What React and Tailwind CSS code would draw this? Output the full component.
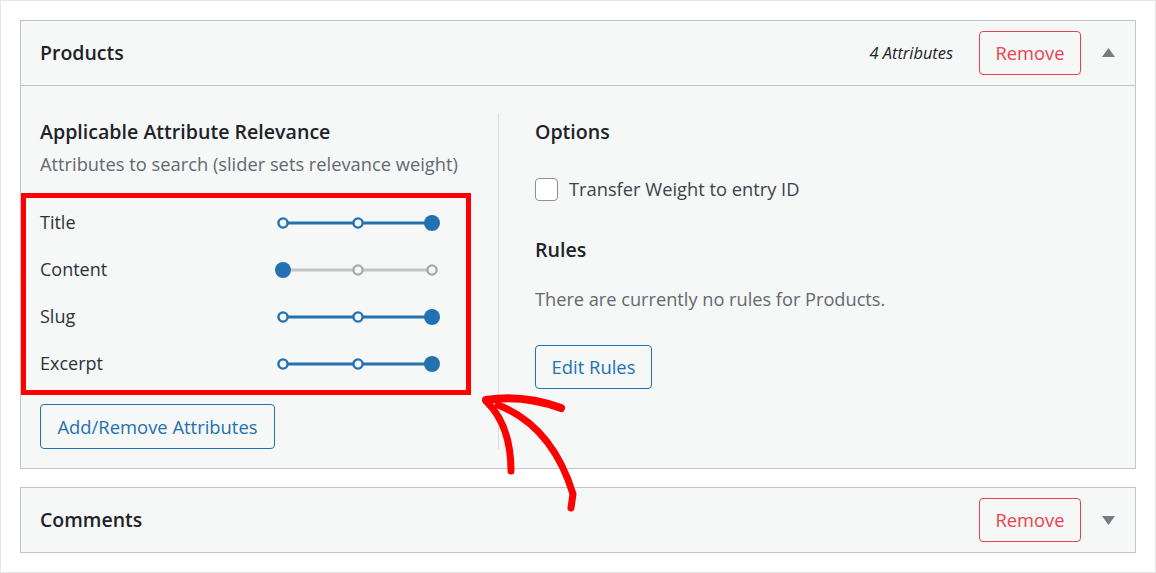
import React from 'react';

const font = { fontFamily: '"Open Sans", "Noto Sans", sans-serif' };

const BLUE = '#2271b1';

const Slider = ({ value }) => {
  const xs = [9, 84, 158];
  const on = value === 2;
  return (
    <svg width="168" height="20" viewBox="0 0 168 20" className="shrink-0">
      <line x1="9" y1="10" x2="158" y2="10" stroke={on ? BLUE : '#c3c4c7'} strokeWidth="3" />
      {xs.map((x, i) =>
        i === value ? (
          <circle key={i} cx={x} cy="10" r="8" fill={BLUE} />
        ) : (
          <circle key={i} cx={x} cy="10" r="4.6" fill="#f6f7f7" stroke={on ? BLUE : '#a7aaad'} strokeWidth="2.4" />
        )
      )}
    </svg>
  );
};

const Caret = ({ up }) => (
  <svg width="13" height="9" viewBox="0 0 13 9" className="shrink-0">
    <polygon points={up ? '6.5,0 13,9 0,9' : '0,0 13,0 6.5,9'} fill="#787c82" />
  </svg>
);

const rows = [
  { label: 'Title', value: 2 },
  { label: 'Content', value: 0 },
  { label: 'Slug', value: 2 },
  { label: 'Excerpt', value: 2 },
];

const App = () => {
  return (
    <div className="relative w-[1156px] h-[573px] bg-white border border-[#e6e6e6] overflow-hidden" style={font}>
      <div className="px-[19px] pt-[19px] flex flex-col gap-[18px]">
        {/* Products panel */}
        <div className="border border-[#c3c4c7] bg-[#f6f7f7]">
          <div className="h-[65px] flex items-center px-[19px] border-b border-[#c3c4c7]">
            <h2 className="text-[19.5px] font-semibold text-[#1d2327]">Products</h2>
            <span className="ml-auto text-[16.4px] italic text-[#1d2327] mr-[26px]">4 Attributes</span>
            <button className="h-[44px] w-[102px] rounded-[4px] border border-[#ec3f4c] text-[#ec3f4c] text-[18.3px]">Remove</button>
            <div className="ml-[21px] mr-[1px] -mt-[1px]"><Caret up /></div>
          </div>
          <div className="flex pt-[27px] pb-[19px] pl-[19px]">
            <div className="w-[459px] border-r border-[#dcdcde] pr-[20px]">
              <h3 className="text-[19.6px] leading-[38px] font-semibold text-[#1d2327]">Applicable Attribute Relevance</h3>
              <p className="text-[18.3px] leading-[26px] text-[#646970]">Attributes to search (slider sets relevance weight)</p>
              <div className="mt-[22px]">
                {rows.map((r) => (
                  <div key={r.label} className="h-[47px] flex items-center">
                    <span className="w-[234px] text-[18px] text-[#2c3338]">{r.label}</span>
                    <Slider value={r.value} />
                  </div>
                ))}
              </div>
              <button className="mt-[17px] h-[45px] w-[235px] rounded-[4px] border border-[#2271b1] text-[#2271b1] text-[18.4px]">Add/Remove Attributes</button>
            </div>
            <div className="pl-[36px]">
              <h3 className="text-[19.6px] leading-[38px] font-semibold text-[#1d2327]">Options</h3>
              <label className="mt-[26px] h-[24px] flex items-center gap-[11px]">
                <span className="w-[23px] h-[23px] rounded-[4px] border border-[#8c8f94] bg-white"></span>
                <span className="text-[18.3px] text-[#3c434a]">Transfer Weight to entry ID</span>
              </label>
              <h3 className="mt-[30px] text-[19.6px] leading-[38px] font-semibold text-[#1d2327]">Rules</h3>
              <p className="mt-[17px] text-[18.2px] leading-[26px] text-[#646970]">There are currently no rules for Products.</p>
              <button className="mt-[33px] h-[44px] w-[117px] rounded-[4px] border border-[#2271b1] text-[#2271b1] text-[18.4px]">Edit Rules</button>
            </div>
          </div>
        </div>

        {/* Comments panel */}
        <div className="border border-[#c3c4c7] bg-[#f6f7f7]">
          <div className="h-[64px] flex items-center px-[19px]">
            <h2 className="text-[19.5px] font-semibold text-[#1d2327]">Comments</h2>
            <button className="ml-auto h-[44px] w-[102px] rounded-[4px] border border-[#ec3f4c] text-[#ec3f4c] text-[18.3px]">Remove</button>
            <div className="ml-[21px] mr-[1px]"><Caret /></div>
          </div>
        </div>
      </div>

      {/* annotation overlay */}
      <div className="absolute left-[20px] top-[192px] w-[450px] h-[202px] border-[5px] border-[#ff0000] pointer-events-none"></div>
      <svg className="absolute left-0 top-0 pointer-events-none" width="1156" height="573">
        <g stroke="#ff0000" fill="none" strokeLinecap="round" strokeLinejoin="round">
          <path d="M485 399 Q522 393 560 407" strokeWidth="8" />
          <path d="M486 401 Q510 425 510 470" strokeWidth="7" />
          <path d="M497 404 Q551 425 572 493 L570 507" strokeWidth="7" />
        </g>
      </svg>
    </div>
  );
};

export default App;
